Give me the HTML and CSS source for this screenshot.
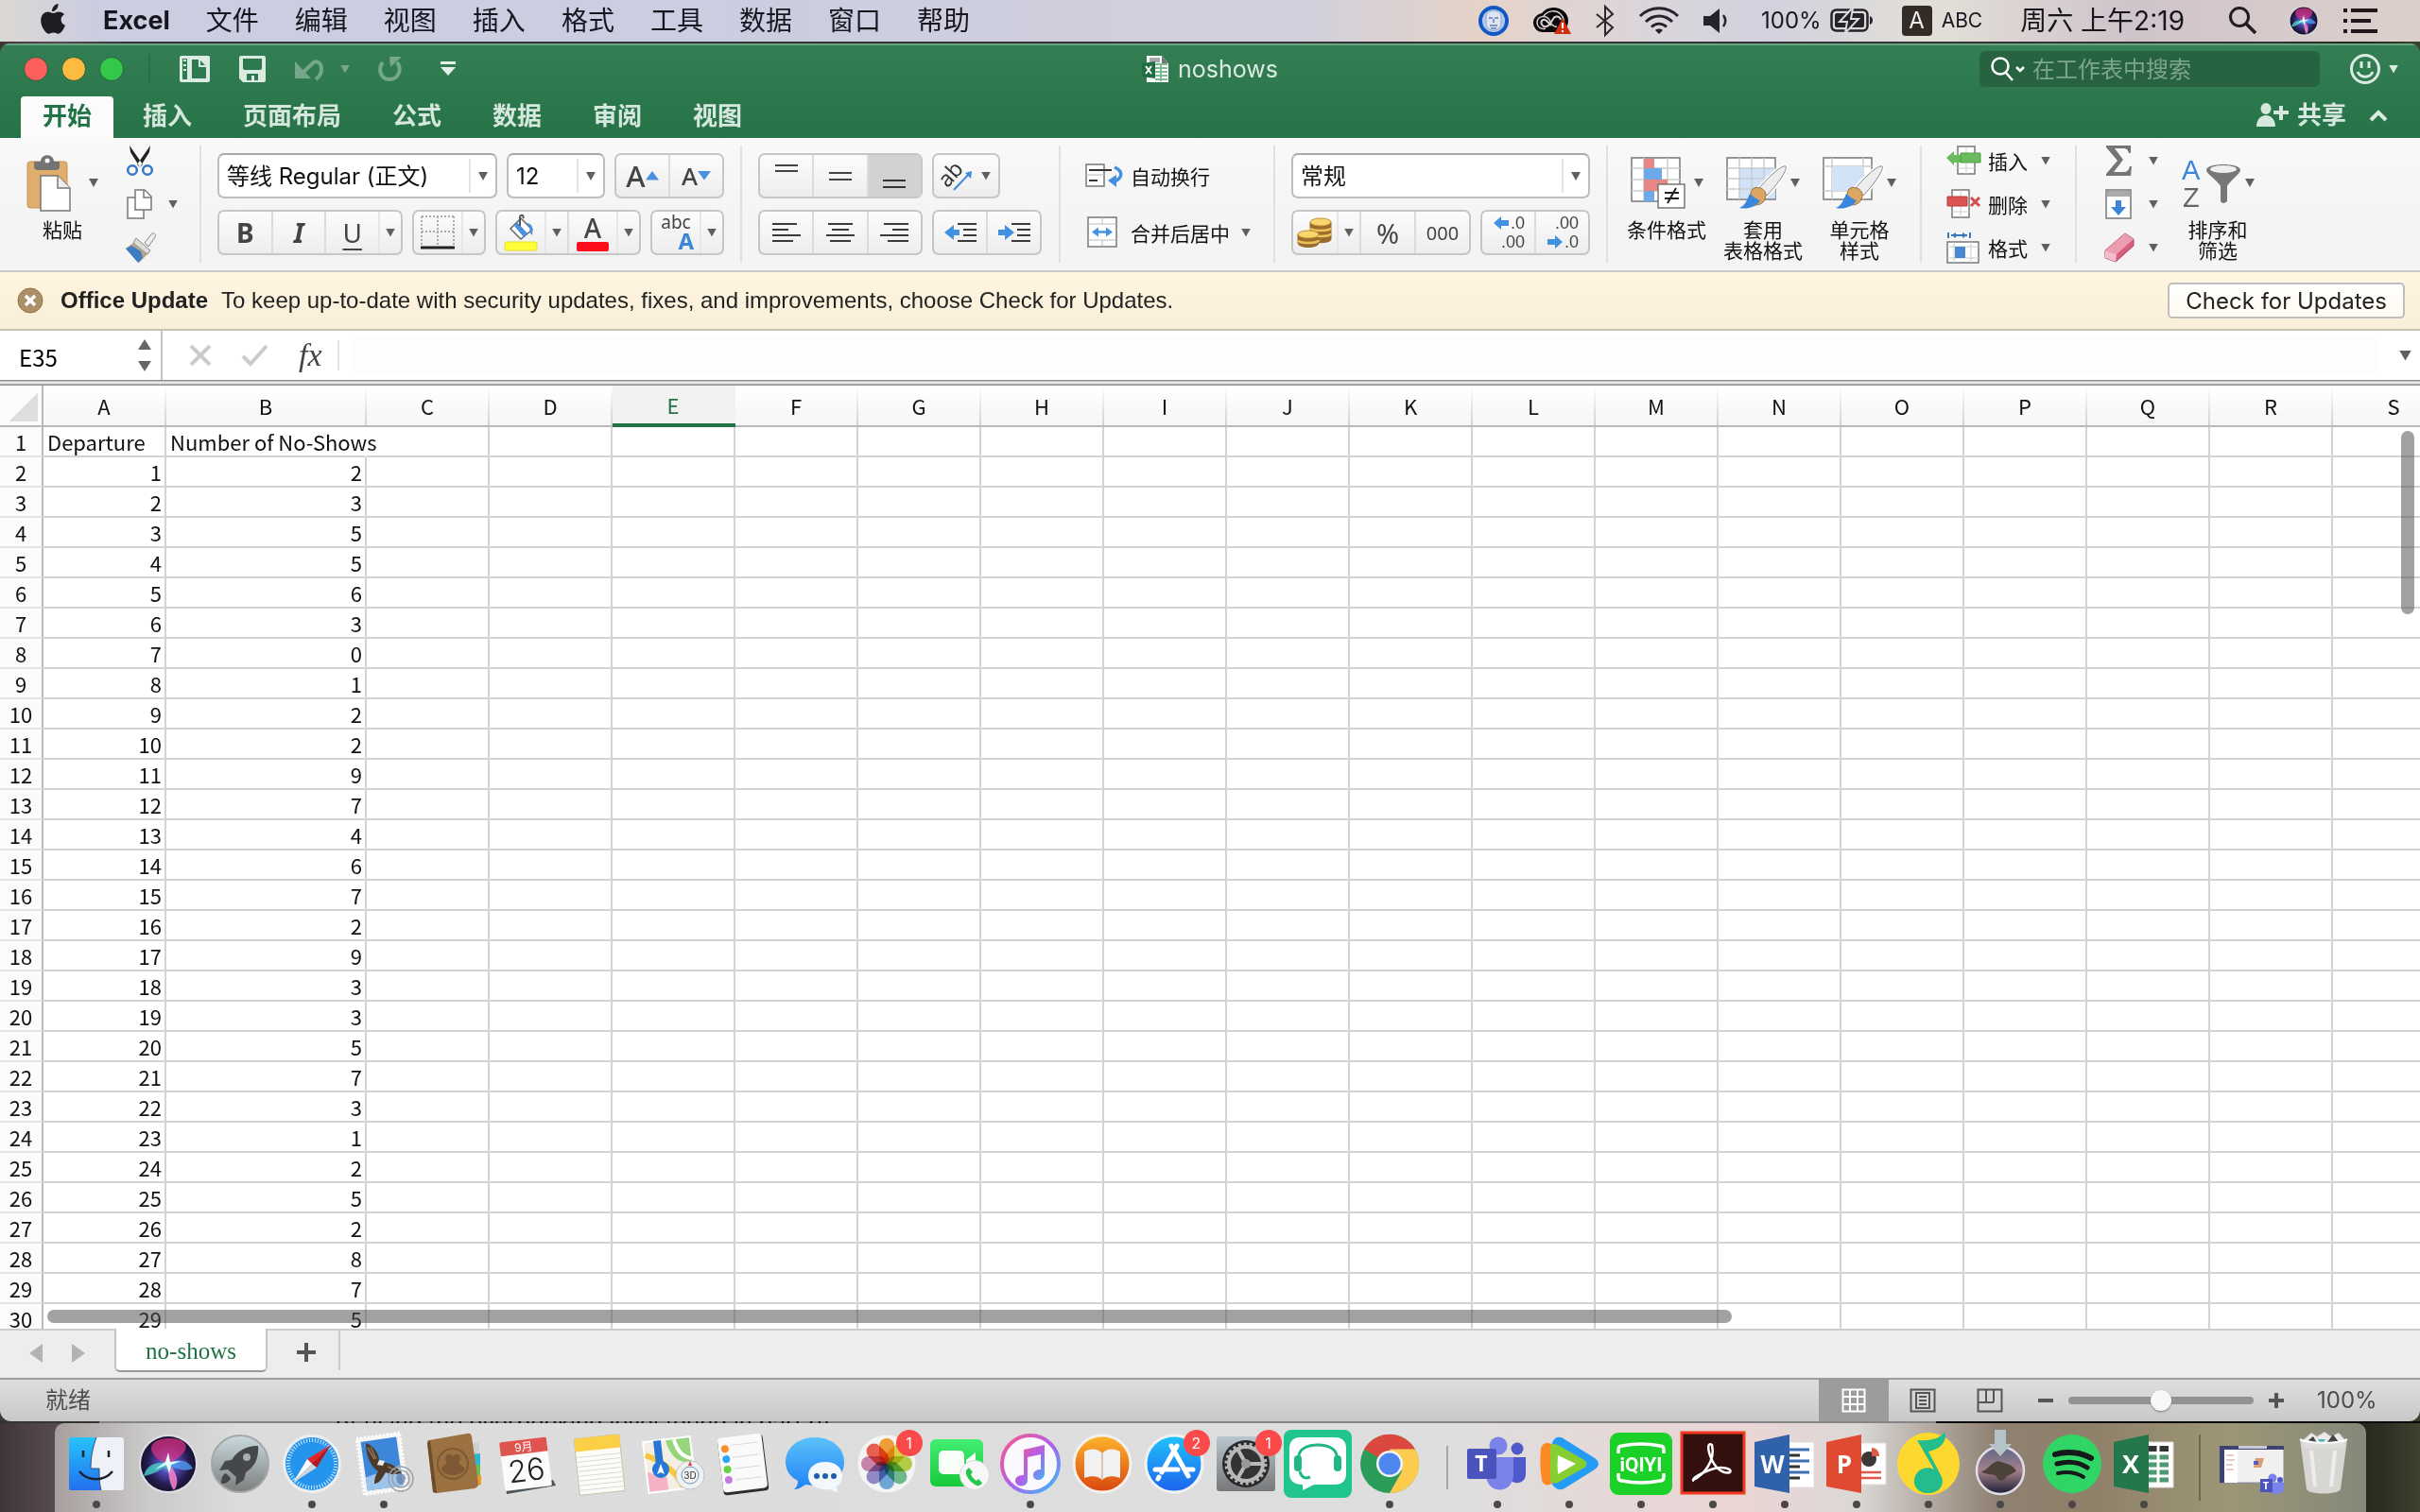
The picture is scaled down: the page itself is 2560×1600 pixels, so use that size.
FILE: index.html
```html
<!DOCTYPE html>
<html lang="zh-CN">
<head>
    <meta charset="UTF-8">
    <title>noshows</title>
    <link rel="stylesheet" href="styles.css">
</head>
<body>
    <header class="menubar">
        <svg class="apple" width="28" height="32" viewBox="0 0 28 32"><path fill="#1f1c22" d="M19.500 0c.3 2.600-.7 4.600-2 6.100-1.300 1.400-2.900 2.100-4.500 2-.2-2.300.7-4.300 2-5.700C16.200 1 18 .2 19.500 0zM26 11.200c-2.300 1.400-3.400 3.200-3.400 5.600 0 2.900 1.600 5 4.300 6-.8 2.500-2 4.700-3.500 6.500-1.300 1.600-2.500 2.400-3.800 2.400-1.900 0-2.600-1.200-5-1.200s-3.200 1.200-5 1.200c-1.400 0-2.700-1-4.200-2.900C2.800 25.700 1.200 21.600 1.200 17.700c0-5.600 3.400-9.200 7.500-9.200 2.300 0 4 1.500 5.600 1.500 1.500 0 3.400-1.600 6-1.600 2.400 0 4.400 1 5.700 2.800z"/></svg>
        <nav class="menus">
            <a href="#" class="app-name">Excel</a>
            <a href="#">文件</a>
            <a href="#">编辑</a>
            <a href="#">视图</a>
            <a href="#">插入</a>
            <a href="#">格式</a>
            <a href="#">工具</a>
            <a href="#">数据</a>
            <a href="#">窗口</a>
            <a href="#">帮助</a>
        </nav>
        <div class="menu-extras">
            <svg width="32" height="32" viewBox="0 0 32 32"><circle cx="16" cy="16" r="14" fill="#b5caec" stroke="#1258c4" stroke-width="4"/><path d="M8 12C8 3 24 3 24 12v6c0 11-16 11-16 0z" fill="#dfe4ee" stroke="#8aa6d8"/><path d="M11 13h4M17 13h4M16 14v4M12 21h8M13 24h6" stroke="#7b96c9" stroke-width="2"/></svg>
            <svg width="42" height="30" viewBox="0 0 42 30"><path d="M11 27C5 27 1 22 1 17c0-5 4-9 9-10C13 3 17 1 22 1c9 0 16 6 16 14 0 7-5 12-12 12z" fill="#0a0a0a"/><path d="M14 23c-5 2-9-2-9-6 0-8 11-9 14-1 2 4 4 6 7 5M12 10c4-6 13-7 18-2 4 4 4 9 1 12" fill="none" stroke="#d8d0d2" stroke-width="1.500"/><path d="M20 20l-5-5c-3-3-7 0-5 4 2 3 5 3 8 0l4-6c2-4 7-3 8 1" fill="none" stroke="#d8d0d2" stroke-width="2"/><path d="M32 12 41 29H23z" fill="#d02f10"/><path d="M32 17v6M32 25v2" stroke="#fff" stroke-width="2"/></svg>
            <svg width="20" height="32" viewBox="0 0 20 32"><path d="M1 9l17 14-8 8V1l8 8L1 23" fill="none" stroke="#2b262c" stroke-width="2"/></svg>
            <svg width="44" height="30" viewBox="0 0 44 30"><g fill="none" stroke="#26222c" stroke-width="3"><path d="M2 10c11-11 29-11 40 0"/><path d="M8 16c8-8 20-8 28 0"/><path d="M14 21.500c5-4.500 11-4.500 16 0"/></g><path d="M22 29l-4-4c2-2 6-2 8 0z" fill="#26222c"/></svg>
            <svg width="28" height="26" viewBox="0 0 28 26"><path d="M0 8h7l10-8v26L7 18H0z" fill="#26222c"/><path d="M21 7c3 4 3 8 0 12" fill="none" stroke="#26222c" stroke-width="2.500"/></svg>
            <span class="battery-pct">100%</span>
            <svg class="battery" width="48" height="26" viewBox="0 0 48 26"><rect x="1.500" y="1.500" width="38" height="22" rx="5" fill="none" stroke="#26222a" stroke-width="2.500"/><rect x="5" y="5" width="31" height="15" rx="2" fill="#26222a"/><path d="M42 8c4 1 4 8 0 9z" fill="#26222a"/><path d="M23 0L10 14h8l-2 12 14-15h-8l2-11z" fill="#26222a" stroke="#dddbe0" stroke-width="2"/></svg>
            <span class="ime">A</span>
            <span class="ime-name">ABC</span>
            <span class="clock">周六 上午2:19</span>
            <svg width="32" height="30" viewBox="0 0 32 30"><circle cx="12" cy="11" r="9.500" fill="none" stroke="#221c22" stroke-width="3"/><path d="M19 18l10 10" stroke="#221c22" stroke-width="3.500"/></svg>
            <svg class="siri-mini" width="38" height="38" viewBox="0 0 76 76"><use href="#siri-ball"/></svg>
            <svg width="36" height="26" viewBox="0 0 36 26"><path d="M0 2h4M8 2h28M0 13h4M8 13h21M0 24h4M8 24h28" stroke="#1f171b" stroke-width="4"/></svg>
        </div>
    </header>

    <main class="window">
        <div class="titlebar">
            <div class="quick">
                <button class="light red" aria-label="关闭"></button>
                <button class="light yellow" aria-label="最小化"></button>
                <button class="light green" aria-label="缩放"></button>
                <span class="quick-sep"></span>
                <button aria-label="新建"><svg width="32" height="28" viewBox="0 0 32 28"><rect width="32" height="28" rx="2" fill="#dcebe2"/><path d="M3 3h5v22H3z" fill="#2e7a50"/><path d="M4 5h3M4 10h3M4 15h3" stroke="#dcebe2" stroke-width="2"/><path d="M13 4h8l7 7v13H13z" fill="#2e7a50"/><path d="M21 4v7h7" fill="none" stroke="#dcebe2" stroke-width="2"/></svg></button>
                <button aria-label="保存"><svg width="28" height="28" viewBox="0 0 28 28"><path d="M0 2q0-2 2-2h24q2 0 2 2v24q0 2-2 2H4l-4-4z" fill="#dcebe2"/><path d="M4 3h20v10q0 2-2 2H6q-2 0-2-2zM8 19h12v7h-4v-5h-3v5H8z" fill="#2e7a50"/></svg></button>
                <button class="dim" aria-label="撤销"><svg width="32" height="28" viewBox="0 0 32 28"><path d="M8 18L20 7c4-2 8 1 8 7 0 5-2 8-6 11" fill="none" stroke="#dcebe2" stroke-width="4"/><path d="M0 6v18h17z" fill="#dcebe2"/></svg></button>
                <button class="dim" aria-label="撤销选项"><span class="caret light-caret"></span></button>
                <button class="dim" aria-label="重做"><svg width="26" height="28" viewBox="0 0 26 28"><path d="M5 7C-1 14 3 25 12 25s14-10 8-18" fill="none" stroke="#dcebe2" stroke-width="4"/><path d="M12 1h13L13 12z" fill="#dcebe2"/></svg></button>
                <button aria-label="自定义工具栏"><svg width="18" height="16" viewBox="0 0 18 16"><path d="M1 1.500h16" stroke="#e4f0e9" stroke-width="3"/><path d="M1 6h16l-8 9z" fill="#e4f0e9"/></svg></button>
            </div>
            <div class="doc-title">
                <svg width="30" height="30" viewBox="0 0 30 30"><path d="M5 1h16l7 8v20H5z" fill="#fff"/><path d="M8 3h11v5H8z" fill="#aaa"/><path d="M21 1v8h7z" fill="#767676"/><path d="M14 10h13M14 14h13M14 18h13M14 22h13M14 26h13M20 9v19" stroke="#7fbb92" stroke-width="2"/><path d="M0 9l14-2v18L0 23z" fill="#1e6e42"/><path d="M4 12l6 8M10 12l-6 8" stroke="#fff" stroke-width="2"/></svg>
                <span>noshows</span>
            </div>
            <div class="title-right">
                <label class="search">
                    <svg width="38" height="26" viewBox="0 0 38 26"><circle cx="10" cy="10" r="8.500" fill="none" stroke="#fff" stroke-width="2.500"/><path d="M16 17l7 8M27 11l4 4 4-4" fill="none" stroke="#fff" stroke-width="2.500"/></svg>
                    <input type="text" placeholder="在工作表中搜索" aria-label="在工作表中搜索">
                </label>
                <button class="smile" aria-label="反馈">
                    <svg width="34" height="34" viewBox="0 0 34 34"><g fill="none" stroke="#dcebe2" stroke-width="3"><circle cx="17" cy="17" r="14.500"/><path d="M13 9v7M21 9v7M9 20c3 7 13 7 16 0"/></g></svg>
                    <span class="caret light-caret"></span>
                </button>
            </div>
        </div>

        <div class="tabs">
            <button class="tab active">开始</button>
            <button class="tab">插入</button>
            <button class="tab">页面布局</button>
            <button class="tab">公式</button>
            <button class="tab">数据</button>
            <button class="tab">审阅</button>
            <button class="tab">视图</button>
            <button class="share">
                <svg width="34" height="26" viewBox="0 0 34 26"><ellipse cx="10" cy="6" rx="5.500" ry="6"/><path d="M0 25c0-16 20-16 20 0zM24 3h4v5h6v4h-6v6h-4v-6h-6V8h6z"/></svg>
                共享
            </button>
            <button class="collapse" aria-label="折叠功能区"><svg width="20" height="14" viewBox="0 0 20 14"><path d="M2 12l8-8 8 8" fill="none" stroke="#dcebe2" stroke-width="4"/></svg></button>
        </div>

        <div class="ribbon">
            <section class="group g-clip">
                <button class="big">
                    <span class="big-top">
                        <svg width="48" height="60" viewBox="0 0 48 60"><rect x="1" y="7" width="42" height="49" rx="3" fill="#e0ae6c" stroke="#c8934d"/><path d="M8 7h7c0-9 14-9 14 0h6v5q0 4-4 4H12q-4 0-4-4z" fill="#747474"/><circle cx="22" cy="6" r="2.500" fill="#fff"/><path d="M15 22h18l13 13v24H15z" fill="#fff" stroke="#777" stroke-width="1.500"/><path d="M33 22v13h13" fill="#eee" stroke="#777" stroke-width="1.500"/></svg>
                        <span class="caret"></span>
                    </span>
                    <span class="big-label">粘贴</span>
                </button>
                <div class="stack">
                    <button class="small" aria-label="剪切"><svg width="32" height="32" viewBox="0 0 32 32"><path d="M5 0l14 20-3 3L6 7zM27 0L13 20l3 3L26 7z" fill="#222"/><g fill="none" stroke="#3478c8" stroke-width="2.500"><circle cx="8" cy="26" r="4.800"/><circle cx="24" cy="26" r="4.800"/></g></svg></button>
                    <button class="small" aria-label="复制"><svg width="32" height="32" viewBox="0 0 32 32"><g fill="#fff" stroke="#777" stroke-width="1.500"><path d="M3 9h11l6 6v16H3z"/><path d="M11 1h10l7 7v14H11z"/><path d="M20 1v8h8"/></g></svg><span class="caret"></span></button>
                    <button class="small" aria-label="格式刷"><svg width="34" height="32" viewBox="0 0 34 32"><path d="M21 11l7-9c2-3 6 0 4 3l-7 10z" fill="#eee" stroke="#888"/><path d="M12 6l15 13-3 4L9 11z" fill="#ddd" stroke="#888"/><path d="M9 11l15 12-9 9L1 17z" fill="#b7a28d"/><path d="M1 17l6-3 10 6 2 7-5 5z" fill="#3c7cc0"/></svg></button>
                </div>
            </section>

            <section class="group g-font">
                <div class="rows">
                    <div class="row">
                        <div class="pick font-name"><select aria-label="字体"><option>等线 Regular (正文)</option></select><span class="caret"></span></div>
                        <div class="pick font-size"><select aria-label="字号"><option>12</option></select><span class="caret"></span></div>
                        <div class="seg two">
                            <button aria-label="增大字号"><span class="grow">A</span><svg width="14" height="10" viewBox="0 0 14 10"><path d="M0 9.500L7 0l7 9.500z" fill="#4a90dd"/></svg></button>
                            <button aria-label="减小字号"><span class="shrink">A</span><svg width="14" height="10" viewBox="0 0 14 10"><path d="M0 0h14L7 9.500z" fill="#4a90dd"/></svg></button>
                        </div>
                    </div>
                    <div class="row">
                        <div class="seg biu"><button class="b">B</button><button class="i">I</button><button class="u">U</button><button class="drop" aria-label="下划线选项"><span class="caret"></span></button></div>
                        <div class="seg mini"><button aria-label="边框"><svg width="36" height="36" viewBox="0 0 36 36"><path d="M1 1h34M1 17h34M1 1v30M18 1v30M35 1v30" fill="none" stroke="#aaa" stroke-width="2" stroke-dasharray="2 2"/><path d="M0 34h36" stroke="#222" stroke-width="3"/></svg></button><button class="drop" aria-label="边框选项"><span class="caret"></span></button></div>
                        <div class="seg colors">
                            <button aria-label="填充颜色"><svg width="36" height="40" viewBox="0 0 36 40"><path d="M18 5L30 17 18 27 7 16z" fill="#fff" stroke="#666" stroke-width="1.500"/><path d="M14 9l11 12-4 4L11 13z" fill="#4a90e0"/><path d="M17 13V4q0-3 3-2l1 3" fill="none" stroke="#555" stroke-width="2"/><path d="M23 10c8 0 8 6 7 13-4-3-1-8-5-11z" fill="#4a90e0"/><rect x="1" y="30" width="34" height="9" rx="2" fill="#fffc38" stroke="#e8dc2a"/></svg></button>
                            <button class="drop" aria-label="填充颜色选项"><span class="caret"></span></button>
                            <button class="font-color" aria-label="字体颜色"><span class="letter">A</span><span class="swatch"></span></button>
                            <button class="drop" aria-label="字体颜色选项"><span class="caret"></span></button>
                        </div>
                        <div class="seg mini"><button class="phonetic"><span>abc</span><b>A</b></button><button class="drop" aria-label="拼音选项"><span class="caret"></span></button></div>
                    </div>
                </div>
            </section>

            <section class="group g-align">
                <div class="rows">
                    <div class="row">
                        <div class="seg three">
                            <button aria-label="顶端对齐"><svg width="26" height="28" viewBox="0 0 26 28"><path d="M1 3h24M1 9h24" stroke="#444" stroke-width="2"/></svg></button>
                            <button aria-label="垂直居中"><svg width="26" height="28" viewBox="0 0 26 28"><path d="M1 11h24M1 18h24" stroke="#444" stroke-width="2"/></svg></button>
                            <button class="on" aria-label="底端对齐"><svg width="26" height="28" viewBox="0 0 26 28"><path d="M1 19h24M1 26h24" stroke="#333" stroke-width="2"/></svg></button>
                        </div>
                        <div class="seg orient"><button aria-label="方向"><svg width="34" height="34" viewBox="0 0 34 34"><text x="2" y="27" transform="rotate(-48 8 24)" font-family="Noto Sans" font-size="23" fill="#333">ab</text><path d="M13 32L30 14" stroke="#4089d8" stroke-width="2"/><path d="M32 12l-1 8-6-6z" fill="#4089d8"/></svg><span class="caret"></span></button></div>
                    </div>
                    <div class="row">
                        <div class="seg three">
                            <button aria-label="左对齐"><svg width="30" height="22" viewBox="0 0 30 22"><path d="M0 2h26M0 8h17M0 14h30M0 20h22" stroke="#3a3a3a" stroke-width="2"/></svg></button>
                            <button aria-label="居中"><svg width="30" height="22" viewBox="0 0 30 22"><path d="M2 2h26M6 8h18M0 14h30M4 20h22" stroke="#3a3a3a" stroke-width="2"/></svg></button>
                            <button aria-label="右对齐"><svg width="30" height="22" viewBox="0 0 30 22"><path d="M4 2h26M13 8h17M0 14h30M8 20h22" stroke="#3a3a3a" stroke-width="2"/></svg></button>
                        </div>
                        <div class="seg two">
                            <button aria-label="减少缩进"><svg width="34" height="22" viewBox="0 0 34 22"><path d="M14 2h20M20 8h14M20 14h14M14 20h20" stroke="#3a3a3a" stroke-width="2"/><path d="M0 11L10 3v5h6v6h-6v5z" fill="#4290e0"/></svg></button>
                            <button aria-label="增加缩进"><svg width="34" height="22" viewBox="0 0 34 22"><path d="M14 2h20M20 8h14M20 14h14M14 20h20" stroke="#3a3a3a" stroke-width="2"/><path d="M17 11L7 3v5H0v6h7v5z" fill="#4290e0"/></svg></button>
                        </div>
                    </div>
                </div>
            </section>

            <section class="group g-wrap">
                <div class="rows">
                    <button class="wide"><svg width="40" height="26" viewBox="0 0 40 26"><path d="M1 1h19v23H1z" fill="#fff" stroke="#777" stroke-width="1.500"/><path d="M1 12h19" stroke="#bbb"/><path d="M4 7h24M4 18h9" stroke="#333" stroke-width="2"/><path d="M31 4c9 4 9 11 0 15" fill="none" stroke="#4290e0" stroke-width="3.500"/><path d="M24 18l9-6v13z" fill="#4290e0"/></svg>自动换行</button>
                    <button class="wide"><svg width="40" height="34" viewBox="0 0 40 34"><path d="M3 1h30v31H3z" fill="#fff" stroke="#777" stroke-width="1.500"/><path d="M3 8h30M3 25h30M18 1v7M18 25v7" stroke="#bbb"/><path d="M12 16.500h12" stroke="#4290e0" stroke-width="2.500"/><path d="M7 16.500l7-5v10zM29 16.500l-7-5v10z" fill="#4290e0"/></svg>合并后居中<span class="caret"></span></button>
                </div>
            </section>

            <section class="group g-num">
                <div class="rows">
                    <div class="row">
                        <div class="pick number-format"><select aria-label="数字格式"><option>常规</option></select><span class="caret"></span></div>
                    </div>
                    <div class="row">
                        <div class="seg num">
                            <button class="coins" aria-label="会计数字格式"><svg width="40" height="32" viewBox="0 0 40 32"><g stroke="#94682c" fill="#9c6c2c"><path d="M15 5v18c0 5 22 5 22 0V5z"/><path d="M2 18v9c0 6 22 6 22 0v-9z"/></g><path d="M15 11c0 4 22 4 22 0M15 17c0 4 22 4 22 0M2 24c0 4 22 4 22 0" fill="none" stroke="#ecc25c" stroke-width="2.500"/><ellipse cx="26" cy="5" rx="11" ry="4" fill="#fad66e" stroke="#c29336"/><ellipse cx="13" cy="18" rx="11" ry="4" fill="#fad66e" stroke="#c29336"/></svg></button>
                            <button class="drop" aria-label="会计格式选项"><span class="caret"></span></button>
                            <button class="pct">%</button>
                            <button class="thousand">000</button>
                        </div>
                        <div class="seg two dec">
                            <button><span><svg width="16" height="14" viewBox="0 0 16 14"><path d="M0 7l8-7v4h8v6H8v4z" fill="#4290e0"/></svg>.0</span><span>.00</span></button>
                            <button><span>.00</span><span><svg width="16" height="14" viewBox="0 0 16 14"><path d="M16 7L8 0v4H0v6h8v4z" fill="#4290e0"/></svg>.0</span></button>
                        </div>
                    </div>
                </div>
            </section>

            <section class="group g-styles">
                <button class="big">
                    <span class="big-top">
                        <svg width="64" height="56" viewBox="0 0 64 56"><path d="M2 1h51v46H2z" fill="#fff" stroke="#777" stroke-width="1.500"/><path d="M2 12h51M2 24h51M2 36h51M15 1v46M40 1v46" stroke="#ccc" stroke-width="1.500"/><path d="M15 2h11v10H15zM15 24h25v12H15z" fill="#e88585"/><path d="M15 12h19v12H15zM15 36h11v11H15z" fill="#6eaaea"/><path d="M30 29h28v25H30z" fill="#fff" stroke="#777" stroke-width="1.500"/><path d="M37 38h15M37 44h15M49 33L40 49" stroke="#222" stroke-width="2"/></svg>
                        <span class="caret"></span>
                    </span>
                    <span class="big-label">条件格式</span>
                </button>
                <button class="big">
                    <span class="big-top">
                        <svg width="64" height="56" viewBox="0 0 64 56"><path d="M1 1h51v44H1z" fill="#fff" stroke="#777" stroke-width="1.500"/><path d="M14 12h38v32H14z" fill="#d3e3f7"/><path d="M1 12h51M1 23h51M1 34h51M14 1v44M27 1v44M40 1v44" stroke="#c5ccd4" stroke-width="1.500"/><g id="brush"><path d="M63 10c2 2-4 14-20 31l-9-7C45 21 59 8 63 10z" fill="#ededed" stroke="#fff" stroke-width="4"/><path d="M63 10c2 2-4 14-20 31l-9-7C45 21 59 8 63 10z" fill="#ededed" stroke="#888"/><path d="M28 34c5-4 14 0 14 6 0 7-5 11-11 11-5-1-7-12-3-17z" fill="#dca762" stroke="#9a713a"/><path d="M25 39c3 2 5 5 11 7-4 7-14 10-22 8 7-3 8-9 11-15z" fill="#3b86db"/></g></svg>
                        <span class="caret"></span>
                    </span>
                    <span class="big-label">套用<br>表格格式</span>
                </button>
                <button class="big">
                    <span class="big-top">
                        <svg width="64" height="56" viewBox="0 0 64 56"><path d="M1 1h51v44H1z" fill="#fff" stroke="#777" stroke-width="1.500"/><path d="M1 10h51M1 36h51M10 1v44M43 1v44" stroke="#ccc" stroke-width="1.500"/><path d="M10 10h33v26H10z" fill="#d3e3f7"/><use href="#brush"/></svg>
                        <span class="caret"></span>
                    </span>
                    <span class="big-label">单元格<br>样式</span>
                </button>
            </section>

            <section class="group g-cells">
                <div class="stack">
                    <button class="small text"><svg width="36" height="32" viewBox="0 0 36 32"><path d="M12 1h18v29H12z" fill="#fff" stroke="#777" stroke-width="1.500"/><path d="M21 1v29M12 24h18" stroke="#ccc"/><path d="M0 13l8-7v4h28v8H8v3z" fill="#6aba5e"/><path d="M15 8h21v10H15z" fill="#6aba5e" stroke="#4e9d44"/></svg>插入<span class="caret"></span></button>
                    <button class="small text"><svg width="36" height="32" viewBox="0 0 36 32"><path d="M6 1h18v29H6z" fill="#fff" stroke="#777" stroke-width="1.500"/><path d="M15 1v29M6 24h18" stroke="#ccc"/><path d="M1 8h21v10H1z" fill="#da5252" stroke="#b83c3c"/><path d="M26 9l9 9M35 9l-9 9" stroke="#d34c4c" stroke-width="3"/></svg>删除<span class="caret"></span></button>
                    <button class="small text"><svg width="36" height="34" viewBox="0 0 36 34"><path d="M1 11h33v22H1z" fill="#fff" stroke="#777" stroke-width="1.500"/><path d="M1 16h33M1 28h33M8 11v22M26 11v22" stroke="#ccc"/><path d="M9 16h11v12H9z" fill="#4888cc"/><path d="M2 1v6M25 1v6M5 4h17" stroke="#3a78bc" stroke-width="2"/><path d="M5 4l5-3v6zM22 4l-5-3v6z" fill="#3a78bc"/></svg>格式<span class="caret"></span></button>
                </div>
            </section>

            <section class="group g-edit">
                <div class="stack">
                    <button class="small" aria-label="自动求和"><svg width="34" height="32" viewBox="0 0 34 32"><path d="M3 0h26v8h-2c-1-4-3-5-6-5H12l9 12-10 13h11c3 0 5-2 6-6h2l-1 10H3v-2l12-14L3 2z" fill="#757575"/></svg><span class="caret"></span></button>
                    <button class="small" aria-label="填充"><svg width="34" height="32" viewBox="0 0 34 32"><path d="M3 1h26v30H3z" fill="#fff" stroke="#777" stroke-width="1.500"/><path d="M4 2h24v6H4z" fill="#aaa"/><path d="M13 12h6v7h5l-8 9-8-9h5z" fill="#3d84d4"/></svg><span class="caret"></span></button>
                    <button class="small" aria-label="清除"><svg width="34" height="32" viewBox="0 0 34 32"><path d="M23 1l9 6v7L13 31 2 27v-8z" fill="#d8607e" stroke="#a8405c"/><path d="M23 1l9 6-18 16-12-4z" fill="#eb9db2"/><path d="M2 19l12 4-1 8-11-4z" fill="#f2bccb"/></svg><span class="caret"></span></button>
                </div>
                <button class="big">
                    <span class="big-top">
                        <svg width="64" height="56" viewBox="0 0 64 56"><g font-family="Liberation Sans" font-size="29"><text x="1" y="24" fill="#3d84d8">A</text><text x="2" y="53" fill="#666">Z</text></g><path d="M27 14c0-8 36-8 36 0 0 4-11 11-14 17v16q-4 4-7 0V31C39 25 27 18 27 14z" fill="#777"/><ellipse cx="45" cy="13" rx="14" ry="4" fill="#eee"/></svg>
                        <span class="caret"></span>
                    </span>
                    <span class="big-label">排序和<br>筛选</span>
                </button>
            </section>
        </div>

        <div class="notice">
            <button class="notice-close" aria-label="关闭提示"><svg width="28" height="28" viewBox="0 0 28 28"><circle cx="14" cy="14" r="13" fill="#ab9068" stroke="#8d734d"/><path d="M9 9l10 10M19 9L9 19" stroke="#fff" stroke-width="3.500"/></svg></button>
            <strong>Office Update</strong>
            <span>To keep up-to-date with security updates, fixes, and improvements, choose Check for Updates.</span>
            <button class="check">Check for Updates</button>
        </div>

        <div class="formula-bar">
            <div class="name-box">
                <input type="text" value="E35" aria-label="名称框">
                <svg width="14" height="34" viewBox="0 0 14 34"><path d="M0 11L7 0l7 11zM0 23h14L7 34z" fill="#666"/></svg>
            </div>
            <button aria-label="取消"><svg width="24" height="24" viewBox="0 0 24 24"><path d="M2 2l20 20M22 2L2 22" stroke="#ccc" stroke-width="4"/></svg></button>
            <button aria-label="输入"><svg width="30" height="24" viewBox="0 0 30 24"><path d="M2 13l8 8L27 2" fill="none" stroke="#ccc" stroke-width="4"/></svg></button>
            <button class="fx">fx</button>
            <input class="formula" type="text" aria-label="编辑栏">
            <button class="expand" aria-label="展开编辑栏"><span class="caret"></span></button>
        </div>

        <div class="sheet">
            <table class="cells">
                <thead><tr id="letters"></tr></thead>
                <tbody id="rows"></tbody>
            </table>
            <div class="scroll-y"></div>
            <div class="scroll-x"></div>
        </div>

        <div class="sheet-tabs">
            <button aria-label="上一张"><svg width="14" height="20" viewBox="0 0 14 20"><path d="M14 0v20L0 10z" fill="#b3b3b3"/></svg></button>
            <button aria-label="下一张"><svg width="14" height="20" viewBox="0 0 14 20"><path d="M0 0v20l14-10z" fill="#b3b3b3"/></svg></button>
            <button class="sheet-tab">no-shows</button>
            <button class="add" aria-label="新建工作表"><svg width="20" height="20" viewBox="0 0 20 20"><path d="M10 0v20M0 10h20" stroke="#555" stroke-width="4"/></svg></button>
        </div>

        <footer class="status">
            <span class="ready">就绪</span>
            <button class="view on" aria-label="普通视图"><svg width="26" height="26" viewBox="0 0 26 26"><path d="M1.500 1.500h23v23h-23zM9 1v24M17 1v24M1 9h24M1 17h24" fill="none" stroke="#fff" stroke-width="2"/></svg></button>
            <button class="view" aria-label="页面布局视图"><svg width="28" height="26" viewBox="0 0 28 26"><path d="M1.500 1.500h25v23h-25zM7 5h14v16H7zM10 9h8M10 13h8M10 17h8" fill="none" stroke="#555" stroke-width="2"/></svg></button>
            <button class="view" aria-label="分页预览"><svg width="28" height="26" viewBox="0 0 28 26"><path d="M1.500 1.500h25v23h-25zM1 15h17M18 1v14M10 1v14" fill="none" stroke="#555" stroke-width="2"/></svg></button>
            <button class="zoom" aria-label="缩小"><svg width="16" height="16" viewBox="0 0 16 16"><path d="M0 8h16" stroke="#555" stroke-width="4"/></svg></button>
            <input type="range" min="0" max="100" value="50" aria-label="显示比例">
            <button class="zoom" aria-label="放大"><svg width="16" height="16" viewBox="0 0 16 16"><path d="M0 8h16M8 0v16" stroke="#555" stroke-width="4"/></svg></button>
            <span class="zoom-value">100%</span>
        </footer>
    </main>

    <div class="behind"><span>of using the overbooking level found in part b).</span></div>

    <div class="dock-area">
        <div class="dock">
            <a href="#" class="app running" aria-label="访达"><svg viewBox="0 0 76 76"><defs><linearGradient id="finder" x2="0" y2="1"><stop stop-color="#27c4fb"/><stop offset="1" stop-color="#2470f0"/></linearGradient></defs><rect x="9" y="10" width="58" height="56" rx="3" fill="#eef2f8"/><path d="M11 10h27c-4 11-6 21-6 33h9c0 8 0 16 2 23H11q-2 0-2-2V12q0-2 2-2z" fill="url(#finder)"/><path d="M38 10c-4 11-6 21-6 33h9c0 8 0 16 2 23" fill="none" stroke="#35507c"/><path d="M24 24v7M51 24v7M20 46c9 11 26 11 35 0" fill="none" stroke="#1b2230" stroke-width="2.500"/></svg></a>
            <a href="#" class="app" aria-label="Siri"><svg viewBox="0 0 76 76"><defs><radialGradient id="siri"><stop stop-color="#64e2ea"/><stop offset=".35" stop-color="#514ab8"/><stop offset=".75" stop-color="#261c50"/><stop offset="1" stop-color="#141430"/></radialGradient></defs><g id="siri-ball"><circle cx="38" cy="38" r="31" fill="#dfdfe5"/><circle cx="38" cy="38" r="29" fill="url(#siri)"/><path d="M38 38C14 30 14 12 38 11c24 0 26 14 0 27z" fill="#d4307f" opacity=".75"/><path d="M38 38C22 34 14 42 12 51c12-2 20-8 26-13z" fill="#45d5c8" opacity=".8"/><path d="M38 38c12-7 22-3 26 5-10 4-18 0-26-5z" fill="#4d9cf0" opacity=".8"/><path d="M38 38c10 10 12 20 6 28-5-6-6-18-6-28z" fill="#ee7fc8" opacity=".9"/><path d="M38 26l2 10 12-1-11 4-2 9-3-9-12 5 11-8z" fill="#e9ffff"/></g></svg></a>
            <a href="#" class="app" aria-label="启动台"><svg viewBox="0 0 76 76"><defs><linearGradient id="launch" x2="0" y2="1"><stop stop-color="#cbdade"/><stop offset="1" stop-color="#7b7e7d"/></linearGradient></defs><circle cx="38" cy="38" r="30" fill="url(#launch)" stroke="#a3a9ab" stroke-width="2"/><path d="M57 19c-12 0-22 5-28 15l-7 1-6 10 9-1 9 8-1 9 9-6 2-8c10-6 14-16 13-28z" fill="#45474a"/><circle cx="45" cy="31" r="4" fill="#a4adb0"/><path d="M23 48c-4 2-5 6-5 11 5 0 9-2 10-6z" fill="#45474a"/></svg></a>
            <a href="#" class="app running" aria-label="Safari"><svg viewBox="0 0 76 76"><circle cx="38" cy="38" r="31" fill="#eee"/><circle cx="38" cy="38" r="28" fill="#2494ec"/><circle cx="38" cy="38" r="25" fill="none" stroke="#d6ecfd" stroke-width="4" stroke-dasharray="1 2"/><path d="M58 18L33 33l5 5z" fill="#e2262a"/><path d="M58 18L43 42l-5-4z" fill="#b9161c"/><path d="M18 58l15-25 5 5z" fill="#fff"/><path d="M18 58l25-16-5-4z" fill="#cfd5da"/></svg></a>
            <a href="#" class="app running" aria-label="邮件"><svg viewBox="0 0 76 76"><g transform="rotate(-8 36 38)"><rect x="13" y="8" width="46" height="60" fill="#f4f4f4" stroke="#fff" stroke-width="3" stroke-dasharray="2 2"/><rect x="17" y="12" width="38" height="52" fill="#3d87da"/><path d="M17 50l38-8v22H17z" fill="#9cc5ec"/></g><path d="M19 16c8 3 13 9 14 18l7 3c7 1 13 5 17 11-7 2-13 1-17-1l-3 5c-3 5-6 7-9 7 0-5 1-9 4-13-9-6-13-18-13-30z" fill="#4e3a2b"/><path d="M21 21l7 12M24 20l6 13M42 41l9 4" stroke="#8b735a" stroke-width="1.500"/><path d="M33 34l6 1-2 5-6-1z" fill="#f1ede6"/><g fill="none" stroke="#9aa1aa" stroke-width="1.500"><circle cx="56" cy="54" r="13"/><circle cx="56" cy="54" r="9"/></g><path d="M52 50c3-3 8-2 9 2 0 5-2 8-5 8s-6-5-4-10z" fill="#5a79a8" opacity=".7"/></svg></a>
            <a href="#" class="app" aria-label="通讯录"><svg viewBox="0 0 76 76"><path d="M54 16h9v12h-9z" fill="#cfcfcf"/><path d="M54 28l10-1v13H54z" fill="#33b3d2"/><path d="M54 40l10-1v12H54z" fill="#70bb4e"/><path d="M54 51l11-1v10l-8 2z" fill="#f0972c"/><path d="M10 13L50 6q4-1 5 3l7 50q0 4-4 5l-40 5q-3 0-4-3L8 16q0-3 2-3z" fill="#9c7142"/><path d="M8 16l6 52 4 1-7-56z" fill="#6e4c28"/><circle cx="35" cy="38" r="16" fill="none" stroke="#7e5933" stroke-width="2"/><path d="M23 44c0-5 5-5 6-7-4-4-1-11 4-9 1 2 3 2 4 0 6-2 8 5 4 9 1 3 6 3 7 7-6 8-20 8-25 0z" fill="#7e5933"/></svg></a>
            <a href="#" class="app" aria-label="日历"><svg viewBox="0 0 76 76"><path d="M9 19l7 51 52-9-3-6-50 6z" fill="#4a5458"/><g transform="rotate(-7 38 38)"><rect x="11" y="12" width="50" height="52" rx="2" fill="#fbfbfb"/><path d="M11 14q0-2 2-2h46q2 0 2 2v13H11z" fill="#e05450"/><g font-family="Inter, Noto Sans CJK SC" text-anchor="middle"><text x="36" y="24" font-size="12" fill="#fff">9月</text><text x="36" y="56" font-size="32" font-weight="300" fill="#222">26</text></g></g></svg></a>
            <a href="#" class="app" aria-label="备忘录"><svg viewBox="0 0 76 76"><g transform="rotate(-6 38 38)"><rect x="14" y="9" width="48" height="60" rx="1" fill="#fdfdf8" stroke="#c9c0a8"/><path d="M14 9h48v14H14z" fill="#fbd045"/><path d="M15 29h46M15 34h46M15 39h46M15 44h46M15 49h46M15 54h46M15 59h46M15 64h46" stroke="#d8d8d8"/></g></svg></a>
            <a href="#" class="app" aria-label="地图"><svg viewBox="0 0 76 76"><g transform="rotate(-7 36 38)"><rect x="11" y="12" width="50" height="54" fill="#f3efe2" stroke="#fff" stroke-width="2"/><path d="M35 13h25v26c-14 0-22-8-25-26z" fill="#96d67b"/><path d="M12 44l20 8v13H12z" fill="#f3b3c4"/><path d="M12 26c14 6 30 20 36 38" fill="none" stroke="#fbc73e" stroke-width="6"/><path d="M26 12v34" stroke="#2776d4" stroke-width="8"/><path d="M44 13c2 14 8 20 16 22" fill="none" stroke="#fff" stroke-width="4"/></g><circle cx="27" cy="44" r="9" fill="#2378d8"/><path d="M27 38l4 11-4-2-4 2z" fill="#fff"/><circle cx="58" cy="50" r="15" fill="#f0f1f3" stroke="#bfc3c8"/><circle cx="58" cy="50" r="9" fill="none" stroke="#6b96b8"/><path d="M56 40l2-5 2 5z" fill="#e33"/><text x="58" y="54" font-family="Inter" font-size="10" text-anchor="middle" fill="#333">3D</text></svg></a>
            <a href="#" class="app" aria-label="提醒事项"><svg viewBox="0 0 76 76"><g transform="rotate(-7 38 38)"><rect x="14" y="9" width="48" height="60" rx="4" fill="#2e2e30"/><rect x="14" y="8" width="47" height="58" rx="4" fill="#fafafa"/><path d="M28 17h28M28 30h28M28 42h28M28 54h28" stroke="#d8d8d8"/><circle cx="21" cy="20" r="4" fill="#fb9028"/><circle cx="21" cy="31" r="4" fill="#2ea6f5"/><circle cx="21" cy="42" r="4" fill="#63d344"/><circle cx="21" cy="53" r="4" fill="#c878e0"/></g></svg></a>
            <a href="#" class="app" aria-label="信息"><svg viewBox="0 0 76 76"><defs><linearGradient id="msg" x2="0" y2="1"><stop stop-color="#5cc2fb"/><stop offset="1" stop-color="#1f82f5"/></linearGradient></defs><path d="M38 10c18 0 31 11 31 26S56 61 38 61l-10-1c-4 3-8 5-12 5 3-3 4-5 4-9C12 52 7 45 7 36c0-15 13-26 31-26z" fill="url(#msg)"/><path d="M49 36c11 0 18 6 18 15 0 5-2 8-6 11 0 3 1 4 2 6-4 0-6-2-9-3-13 1-23-4-23-14 0-9 7-15 18-15z" fill="#f3f8fc"/><g fill="#1860a8"><circle cx="40" cy="51" r="3"/><circle cx="49" cy="51" r="3"/><circle cx="58" cy="51" r="3"/></g></svg></a>
            <a href="#" class="app" aria-label="照片"><svg viewBox="0 0 76 76"><circle cx="38" cy="38" r="31" fill="#f4f4f4" stroke="#ddd"/><g class="petals"><rect x="30" y="11" width="16" height="27" rx="8" fill="#f99b23"/><rect x="30" y="11" width="16" height="27" rx="8" fill="#e8d334" transform="rotate(45 38 38)"/><rect x="30" y="11" width="16" height="27" rx="8" fill="#b2d236" transform="rotate(90 38 38)"/><rect x="30" y="11" width="16" height="27" rx="8" fill="#63bb83" transform="rotate(135 38 38)"/><rect x="30" y="11" width="16" height="27" rx="8" fill="#62a5dc" transform="rotate(180 38 38)"/><rect x="30" y="11" width="16" height="27" rx="8" fill="#8d83c4" transform="rotate(225 38 38)"/><rect x="30" y="11" width="16" height="27" rx="8" fill="#cb7ba8" transform="rotate(270 38 38)"/><rect x="30" y="11" width="16" height="27" rx="8" fill="#ee5340" transform="rotate(315 38 38)"/></g></svg><span class="badge">1</span></a>
            <a href="#" class="app" aria-label="FaceTime"><svg viewBox="0 0 76 76"><defs><linearGradient id="ft" x2="0" y2="1"><stop stop-color="#43ee72"/><stop offset="1" stop-color="#17c93a"/></linearGradient></defs><rect x="8" y="12" width="56" height="50" rx="6" fill="url(#ft)"/><rect x="17" y="24" width="27" height="25" rx="5" fill="#f7fff8"/><path d="M46 34l10-8v20l-10-6z" fill="#f7fff8"/><circle cx="55" cy="50" r="15.500" fill="#f7f7f7" stroke="#d8d8d8"/><path d="M49 42l4 5-2 2c1 3 3 5 6 7l2-2 4 4c-2 4-6 4-9 1-5-3-9-9-8-14z" fill="#24c74b"/></svg></a>
            <a href="#" class="app running" aria-label="iTunes"><svg viewBox="0 0 76 76"><defs><linearGradient id="it" x1="0" y1="0" x2="1" y2="1"><stop stop-color="#fb5a86"/><stop offset=".5" stop-color="#b45ee8"/><stop offset="1" stop-color="#2fc1f8"/></linearGradient></defs><circle cx="38" cy="38" r="30" fill="#fafafe" stroke="url(#it)" stroke-width="4"/><path d="M31 23l22-5v30c0 9-12 9-12 2 0-5 5-6 8-6V28l-14 3v24c0 9-13 8-13 1 0-5 5-6 9-6z" fill="url(#it)"/></svg></a>
            <a href="#" class="app" aria-label="图书"><svg viewBox="0 0 76 76"><defs><linearGradient id="bk" x2="0" y2="1"><stop stop-color="#fdb42c"/><stop offset="1" stop-color="#d9460f"/></linearGradient></defs><circle cx="38" cy="38" r="30" fill="url(#bk)" stroke="#f4f0ee" stroke-width="3"/><path d="M19 25c8-4 15-3 19 2 4-5 11-6 19-2v28c-8-3-15-2-19 2-4-4-11-5-19-2z" fill="#f1f1f1"/><path d="M38 27v28" stroke="#d8c5b8" stroke-width="2"/></svg></a>
            <a href="#" class="app" aria-label="App Store"><svg viewBox="0 0 76 76"><defs><linearGradient id="as" x2="0" y2="1"><stop stop-color="#20c3fc"/><stop offset="1" stop-color="#1d62ee"/></linearGradient></defs><circle cx="38" cy="38" r="30" fill="url(#as)" stroke="#f0f2f4" stroke-width="3"/><path d="M35 19l18 32M41 19L25 47M18 44h24M50 44h8M22 52l-1 2" stroke="#fff" stroke-width="5" stroke-linecap="round"/></svg><span class="badge">2</span></a>
            <a href="#" class="app" aria-label="系统偏好设置"><svg viewBox="0 0 76 76"><defs><linearGradient id="sp" x2="0" y2="1"><stop stop-color="#b8c6ce"/><stop offset="1" stop-color="#77787a"/></linearGradient></defs><rect x="7" y="9" width="62" height="58" rx="3" fill="url(#sp)"/><circle cx="38" cy="38" r="25" fill="#29292a"/><circle cx="38" cy="38" r="18" fill="#333" stroke="#b8b8b8" stroke-width="4"/><circle cx="38" cy="38" r="21" fill="none" stroke="#b8b8b8" stroke-width="3" stroke-dasharray="3 3"/><path d="M38 38h18M38 38L29 22M38 38L29 54" stroke="#b8b8b8" stroke-width="4"/><circle cx="38" cy="38" r="5" fill="#999"/></svg><span class="badge">1</span></a>
            <a href="#" class="app" aria-label="客服"><svg viewBox="0 0 76 76"><rect x="2" y="2" width="72" height="72" rx="8" fill="#1fc58a"/><path d="M20 10h36q12 0 12 12v26q0 12-12 12H34l-12 6v-6q-14 0-14-12V22q0-12 12-12z" fill="#fff"/><path d="M18 30c0-16 40-16 40 0M19 46c2 7 6 8 11 6" fill="none" stroke="#1fb883" stroke-width="3"/><rect x="13" y="29" width="8" height="17" rx="4" fill="#1fb883"/><rect x="55" y="29" width="8" height="17" rx="4" fill="#1fb883"/></svg></a>
            <a href="#" class="app running" aria-label="Chrome"><svg viewBox="0 0 76 76"><circle cx="38" cy="38" r="31" fill="#2c9c5b"/><path d="M38 38L11 22.500A31 31 0 0 1 65 22.500z" fill="#da483f"/><path d="M38 22.500h27A31 31 0 0 1 38 69l13-23z" fill="#fdcb4e"/><circle cx="38" cy="38" r="14" fill="#f4f4f4"/><circle cx="38" cy="38" r="11.500" fill="#4b87ee"/></svg></a>
            <span class="dock-sep"></span>
            <a href="#" class="app running" aria-label="Teams"><svg viewBox="0 0 76 76"><circle cx="39" cy="19" r="9.500" fill="#7b83eb"/><circle cx="59" cy="22" r="6.500" fill="#5059c9"/><path d="M50 31h18v18c0 10-12 12-18 5z" fill="#5059c9"/><path d="M26 31h29v18c0 22-29 22-29 0z" fill="#7b83eb"/><rect x="6" y="22" width="31" height="32" rx="2" fill="#4b53bc"/><text x="21" y="46" font-family="Open Sans" font-size="23" font-weight="700" text-anchor="middle" fill="#fff">T</text></svg></a>
            <a href="#" class="app running" aria-label="腾讯视频"><svg viewBox="0 0 76 76"><path d="M20 16c2-7 8-8 13-4l32 20q8 6 0 12L33 64q-7 4-13-4z" fill="#249cf5"/><path d="M8 22c2-7 8-7 13-4v40c-5 4-11 3-12-3-2-11-2-22-1-33z" fill="#fb8a25"/><path d="M18 20q1-5 8-2l28 16q5 4 0 8L26 58q-7 2-8-3z" fill="#86cf30"/><path d="M26 29l19 9-19 11q-1-10 0-20z" fill="#fff"/></svg></a>
            <a href="#" class="app running" aria-label="爱奇艺"><svg viewBox="0 0 76 76"><rect x="5" y="5" width="66" height="66" rx="9" fill="#1bd127"/><path d="M14 27v-4q0-4 4-4 20-4 40 0 4 0 4 4v4M14 48v4q0 4 4 4 20 4 40 0 4 0 4-4v-4" fill="none" stroke="#fff" stroke-width="3.500"/><text x="38" y="46" font-family="Roboto" font-size="21" font-weight="700" text-anchor="middle" fill="#fff">iQIYI</text></svg></a>
            <a href="#" class="app running" aria-label="Acrobat"><svg viewBox="0 0 76 76"><rect x="5" y="5" width="66" height="64" fill="#34100e" stroke="#f13a20" stroke-width="3"/><path d="M17 55c11-5 24-20 20-37-4-3-6 3 0 16 5 11 14 15 19 13 3-4-9-7-20-3-12 4-22 11-18 12" fill="none" stroke="#fff" stroke-width="2.500"/></svg></a>
            <a href="#" class="app running" aria-label="Word"><svg viewBox="0 0 76 76"><path d="M34 15h35v48H34z" fill="#fff" stroke="#ddd"/><path d="M38 23h26M38 35h26M38 47h26" stroke="#3b6fb5" stroke-width="3"/><path d="M38 29h26M38 41h26M38 53h26" stroke="#333" stroke-width="3" stroke-dasharray="16 10"/><path d="M6 15l37-8v62L6 62z" fill="#2f62a9"/><text x="25" y="48" font-family="Open Sans" font-size="26" font-weight="700" text-anchor="middle" fill="#fff">W</text></svg></a>
            <a href="#" class="app running" aria-label="PowerPoint"><svg viewBox="0 0 76 76"><path d="M40 16h29v44H40z" fill="#fff" stroke="#ddd"/><circle cx="51" cy="33" r="8" fill="#3a3737"/><path d="M54 30v-9c5 0 8 4 8 9z" fill="#dd5b48"/><path d="M43 47h21M43 53h21" stroke="#dd5b48" stroke-width="2.500"/><path d="M6 15l37-8v62L6 62z" fill="#e04a31"/><text x="25" y="48" font-family="Open Sans" font-size="26" font-weight="700" text-anchor="middle" fill="#fff">P</text></svg></a>
            <a href="#" class="app running" aria-label="QQ音乐"><svg viewBox="0 0 76 76"><circle cx="38" cy="38" r="33" fill="#fdd92f"/><path d="M56 4c1 13-6 18-18 21l14 27c3 8-2 17-14 17-10 0-16-6-15-14 1-10 12-16 21-11L26 13c13 1 23-1 30-9z" fill="#23bd8d"/></svg></a>
            <a href="#" class="app running" aria-label="下载"><svg viewBox="0 0 76 76"><defs><linearGradient id="isl" x2="0" y2="1"><stop stop-color="#5c6687"/><stop offset=".5" stop-color="#a58189"/><stop offset="1" stop-color="#1c1c34"/></linearGradient></defs><circle cx="38" cy="45" r="25" fill="url(#isl)" stroke="#dfdfea" stroke-width="2.500"/><path d="M18 46c7-1 9-9 18-11 7 3 14 3 18 9 4 3-8 5-10 8-3 6-9 4-10-1-5-3-12-1-16-5z" fill="#4b4238"/><path d="M32 2h12v15h6L38 30 26 17h6z" fill="#b5c2c8"/></svg></a>
            <a href="#" class="app running" aria-label="Spotify"><svg viewBox="0 0 76 76"><circle cx="38" cy="38" r="31" fill="#2fd666"/><g fill="none" stroke="#14191a" stroke-linecap="round"><path d="M20 28c13-4 28-2 38 4" stroke-width="6"/><path d="M22 38c11-3 23-2 32 4" stroke-width="5"/><path d="M23 48c10-2 19-1 27 4" stroke-width="4"/></g></svg></a>
            <a href="#" class="app running" aria-label="Excel"><svg viewBox="0 0 76 76"><path d="M34 15h35v48H34z" fill="#fff" stroke="#ddd"/><path d="M38 22h26" stroke="#333" stroke-width="6"/><path d="M38 31h26M38 39h26M38 47h26M38 55h26" stroke="#4f9973" stroke-width="5"/><path d="M53 16v46" stroke="#fff" stroke-width="3"/><path d="M6 15l37-8v62L6 62z" fill="#24774a"/><text x="24" y="48" font-family="Open Sans" font-size="27" font-weight="700" text-anchor="middle" fill="#fff">X</text></svg></a>
            <span class="dock-sep dark"></span>
            <a href="#" class="app" aria-label="Teams 窗口"><svg viewBox="0 0 76 76"><rect x="4" y="20" width="68" height="38" fill="#f1f0ef" stroke="#8588a8"/><path d="M4 19h68v4H4z" fill="#3f4270"/><path d="M24 19h30v3H24z" fill="#c9cad8"/><path d="M4 22h5v36H4z" fill="#3f4270"/><path d="M9 23h14v35H9z" fill="#fff"/><path d="M11 29h8M11 34h9M11 39h7M11 44h8" stroke="#cc9a94"/><path d="M42 32h9l-3 10h-8z" fill="#dd9d72"/><path d="M40 35h5v4h-5z" fill="#565cc0"/><circle cx="60" cy="53" r="4.500" fill="#7b83eb"/><circle cx="68" cy="55" r="3" fill="#5059c9"/><path d="M56 58h16v8q-5 7-16 2z" fill="#7b83eb"/><rect x="47" y="54" width="13" height="14" fill="#4b53bc"/><text x="53" y="65" font-family="Open Sans" font-size="11" font-weight="700" text-anchor="middle" fill="#fff">T</text></svg></a>
            <a href="#" class="app" aria-label="废纸篓"><svg viewBox="0 0 76 76"><path d="M15 14l10-9 6 4 8-5 7 5 8-4 8 9-4 8H18z" fill="#ece9e6" stroke="#aaa"/><path d="M22 13l5-4 4 7zM42 15l6-8 6 8z" fill="#444"/><path d="M32 12h8l-4 6z" fill="#4eb8b8"/><path d="M13 12c8 5 42 5 50 0l-7 53c-3 6-33 6-36 0z" fill="#dddcd9" opacity=".93"/><path d="M13 12c8 5 42 5 50 0" fill="none" stroke="#fff" stroke-width="2"/><path d="M25 24l4 38M50 24l-4 38" stroke="#f7f7f7" stroke-width="4" opacity=".7"/></svg></a>
        </div>
    </div>

    <script>
        const letters = document.getElementById('letters');
        const rows = document.getElementById('rows');
        const columns = 'ABCDEFGHIJKLMNOPQRS'.split('');
        const selectedColumn = 'E';
        const noShows = [2, 3, 5, 5, 6, 3, 0, 1, 2, 2, 9, 7, 4, 6, 7, 2, 9, 3, 3, 5, 7, 3, 1, 2, 5, 2, 8, 7, 5];

        function addCell(row, tag, text, className) {
            const cell = document.createElement(tag);
            cell.textContent = text;
            if (className) cell.className = className;
            row.appendChild(cell);
        }

        addCell(letters, 'th', '', 'corner');
        columns.forEach(letter => {
            let name = letter === 'B' ? 'col-b' : 'col';
            if (letter === selectedColumn) name += ' selected';
            addCell(letters, 'th', letter, name);
        });

        for (let n = 1; n <= noShows.length + 1; n++) {
            const row = document.createElement('tr');
            addCell(row, 'th', n);
            columns.forEach(letter => {
                if (n === 1 && letter === 'A') addCell(row, 'td', 'Departure', 'label');
                else if (n === 1 && letter === 'B') addCell(row, 'td', 'Number of No-Shows', 'label spill');
                else if (letter === 'A') addCell(row, 'td', n - 1);
                else if (letter === 'B') addCell(row, 'td', noShows[n - 2]);
                else addCell(row, 'td', '');
            });
            rows.appendChild(row);
        }
    </script>
</body>
</html>
```
FILE: styles.css
```css
* {
    box-sizing: border-box;
}
body {
    margin: 0;
    height: 100vh;
    overflow: hidden;
    display: flex;
    flex-direction: column;
    font-family: "Inter", "Noto Sans CJK SC", sans-serif;
    background: linear-gradient(90deg, #40363a, #574b50 60px, #333 140px, #333 2400px, #24281f 2500px, #3d412e);
}
button {
    padding: 0;
    border: none;
    background: none;
    font: inherit;
    color: inherit;
    display: flex;
    align-items: center;
    justify-content: center;
}
input, select {
    font: inherit;
    color: inherit;
    border: none;
    background: none;
    outline: none;
}
svg {
    display: block;
    flex: none;
    overflow: visible;
}
a {
    color: inherit;
    text-decoration: none;
}
.caret {
    flex: none;
    width: 10px;
    height: 9px;
    background: #606060;
    clip-path: polygon(0 0, 100% 0, 50% 100%);
}
.light-caret {
    background: #dcebe2;
}

/* menu bar */
.menubar {
    flex: none;
    height: 44px;
    padding: 0 42px;
    display: flex;
    align-items: center;
    font-size: 28px;
    line-height: 44px;
    color: #17161f;
    background: linear-gradient(90deg, #dcd8d4 0%, #cbcde0 4%, #cbcde0 30%, #d2d0dc 54%, #e5d3c9 61%, #d9d5dc 69%, #d2d1de 73%, #e3dfd8 80%, #cfc4ca 88%, #ddd0cc 100%);
}
.apple {
    margin-bottom: 4px;
}
.menus {
    display: flex;
    gap: 38px;
    margin-left: 39px;
}
.app-name {
    font-size: 27px;
    font-weight: 700;
}
.menu-extras {
    margin-left: auto;
    display: flex;
    align-items: center;
    gap: 22px;
}
.menu-extras > svg {
    margin-right: 3px;
}
.battery-pct {
    margin-left: 8px;
    font-size: 24px;
}
.menu-extras .battery {
    margin: 0 6px 0 -13px;
}
.ime {
    width: 32px;
    height: 32px;
    line-height: 32px;
    border-radius: 4px;
    text-align: center;
    font-size: 24px;
    color: #eee;
    background: #322b26;
}
.ime-name {
    margin-left: -12px;
    margin-right: 18px;
    font-size: 21px;
}
.clock {
    margin-right: 24px;
}
.menu-extras .siri-mini {
    margin: 0 1px 0 4px;
}

/* title bar and ribbon tabs */
.window {
    flex: 1;
    min-height: 0;
    margin-top: 2px;
    display: flex;
    flex-direction: column;
    overflow: hidden;
    border-radius: 10px 10px 12px 12px;
    background: linear-gradient(#347e54, #267347 100px);
}
.titlebar {
    flex: none;
    height: 52px;
    display: grid;
    grid-template-columns: 1fr auto 1fr;
    align-items: center;
    border-top: 2px solid #6aa583;
}
.quick {
    display: flex;
    align-items: center;
    padding-left: 25px;
}
.quick button {
    margin-right: 31px;
}
.quick .light {
    width: 26px;
    height: 26px;
    margin-right: 14px;
    border-radius: 50%;
    border: 1px solid #2c5f42;
}
.red {
    background: #fc605c;
}
.yellow {
    background: #fdbc40;
}
.quick .green {
    margin-right: 26px;
    background: #34c84a;
}
.quick-sep {
    width: 2px;
    height: 32px;
    margin-right: 31px;
    background: #2a6b47;
}
.quick .dim {
    margin-right: 16px;
    opacity: 0.4;
}
.quick .dim + .dim + .dim {
    margin: 0 39px 0 14px;
}
.doc-title {
    display: flex;
    align-items: center;
    gap: 8px;
    font-size: 25px;
    color: #dcebe2;
}
.title-right {
    display: flex;
    justify-content: flex-end;
    align-items: center;
    padding-right: 23px;
}
.search {
    width: 360px;
    height: 38px;
    padding: 0 12px;
    display: flex;
    align-items: center;
    gap: 6px;
    border-radius: 6px;
    background: #286341;
}
.search input {
    flex: 1;
    min-width: 0;
    padding: 0;
    font-size: 24px;
}
.search input::placeholder {
    color: #7ea58e;
    opacity: 1;
}
.smile {
    margin-left: 31px;
    gap: 8px;
}
.tabs {
    flex: none;
    height: 48px;
    padding: 0 34px 0 18px;
    display: flex;
    align-items: stretch;
    font-size: 26px;
    font-weight: 600;
    line-height: 36px;
    color: #d6e7dd;
}
.tab {
    margin: 4px 4px 0;
    padding: 0 23px 2px;
    border-radius: 4px 4px 0 0;
}
.tab.active {
    color: #217346;
    background: #fbfbfb;
}
.share {
    margin-left: auto;
    gap: 9px;
}
.share svg {
    fill: #d6e7dd;
}
.collapse {
    margin-left: 24px;
}

/* ribbon */
.ribbon {
    flex: none;
    padding: 8px 0;
    display: flex;
    border-bottom: 2px solid #c9c9c9;
    background: linear-gradient(#f9f9f9, #f4f4f4 60%);
    font-size: 21px;
    color: #111;
}
.group {
    height: 124px;
    display: flex;
    border-left: 2px solid #e0e0e0;
    padding: 0 17px;
}
.g-clip {
    border-left: none;
    padding: 0 23px 0 28px;
    gap: 28px;
}
.g-align {
    padding-right: 18px;
}
.g-wrap {
    padding: 0 24px 0 26px;
}
.g-styles {
    padding: 0 22px 0 20px;
    gap: 18px;
}
.g-styles .big {
    min-width: 84px;
}
.g-cells {
    padding: 0 26px;
}
.g-edit {
    padding-left: 28px;
    gap: 24px;
}
.big {
    flex-direction: column;
    justify-content: flex-start;
}
.big-top {
    height: 79px;
    display: flex;
    align-items: center;
    gap: 4px;
}
.g-clip .big-top {
    gap: 18px;
}
.big-label {
    line-height: 22px;
    white-space: nowrap;
}
.stack {
    display: flex;
    flex-direction: column;
    justify-content: space-between;
    align-items: flex-start;
}
.small {
    height: 32px;
    gap: 14px;
}
.small.text svg {
    margin-right: -6px;
}
.rows {
    display: flex;
    flex-direction: column;
    gap: 12px;
    padding-top: 8px;
}
.row {
    display: flex;
    gap: 10px;
    height: 48px;
}
.wide {
    height: 48px;
    justify-content: flex-start;
    gap: 8px;
}
.wide .caret {
    margin-left: 4px;
}
.pick {
    position: relative;
    height: 48px;
    border: 2px solid #bdbdbd;
    border-top-color: #a8a8a8;
    border-radius: 7px;
    background: #fff;
    font-size: 24px;
}
.pick select {
    appearance: none;
    width: 100%;
    height: 100%;
    padding: 0 30px 0 8px;
}
.pick .caret {
    position: absolute;
    right: 8px;
    top: 18px;
}
.pick::after {
    content: "";
    position: absolute;
    right: 26px;
    top: 4px;
    bottom: 4px;
    width: 2px;
    background: #e4e4e4;
}
.font-name {
    width: 296px;
}
.font-size {
    width: 104px;
}
.number-format {
    width: 316px;
}
.seg {
    display: flex;
    border: 2px solid #c6c6c6;
    border-radius: 7px;
    background: linear-gradient(#fcfcfc, #ededed);
    color: #444;
}
.seg button {
    flex: 1;
    border-left: 2px solid #dcdcdc;
}
.seg button:first-child {
    border-left: none;
}
.seg .drop {
    flex: none;
    width: 24px;
    border-left-color: #e6e6e6;
}
.seg .on {
    background: #d2d2d2;
}
.two {
    width: 116px;
}
.three {
    width: 174px;
}
.biu {
    width: 196px;
}
.mini {
    width: 78px;
}
.colors {
    width: 154px;
}
.orient {
    width: 72px;
}
.orient button {
    gap: 8px;
}
.num {
    width: 190px;
}
.seg .coins {
    flex: none;
    width: 46px;
}
.grow, .shrink, .font-color, .phonetic, .biu, .num {
    font-family: "Noto Sans", sans-serif;
}
.grow {
    font-size: 31px;
    font-weight: 500;
}
.shrink {
    font-size: 26px;
    font-weight: 500;
}
.biu {
    font-size: 28px;
}
.b {
    font-weight: 700;
}
.i {
    font-style: italic;
    font-weight: 700;
}
.u {
    text-decoration: underline;
    text-underline-offset: 6px;
}
.font-color {
    flex-direction: column;
}
.letter {
    font-size: 28px;
    font-weight: 500;
    line-height: 29px;
}
.swatch {
    width: 34px;
    height: 10px;
    border-radius: 2px;
    background: #fc0d1b;
}
.phonetic {
    flex-direction: column;
    font-size: 19px;
    line-height: 18px;
}
.phonetic b {
    align-self: flex-end;
    margin-right: 6px;
    font-size: 24px;
    line-height: 22px;
    color: #3d87d8;
}
.pct {
    font-size: 29px;
}
.thousand {
    font-size: 20px;
}
.dec button {
    flex-direction: column;
    align-items: flex-end;
    padding-right: 10px;
    font-family: "Liberation Sans", sans-serif;
    font-size: 18px;
    line-height: 20px;
}
.dec span {
    display: flex;
    align-items: center;
    gap: 2px;
}

/* update notice */
.notice {
    flex: none;
    height: 62px;
    padding: 0 16px 0 18px;
    display: flex;
    align-items: center;
    font-family: "Liberation Sans", sans-serif;
    font-size: 24px;
    color: #222;
    border-bottom: 2px solid #c9c2ad;
    background: linear-gradient(#fff5e0, #faefd9);
}
.notice strong {
    margin: 0 14px 0 18px;
}
.check {
    margin-left: auto;
    height: 38px;
    padding: 0 17px;
    border: 2px solid #bfbfbf;
    border-radius: 5px;
    font-family: "Inter", sans-serif;
    background: linear-gradient(#fff, #fffaee);
}

/* formula bar */
.formula-bar {
    flex: none;
    height: 58px;
    padding-bottom: 6px;
    display: flex;
    align-items: center;
    background: linear-gradient(#fff 52px, #8f8f8f 52px, #8f8f8f 53px, #f0f0f0 54px, #ddd 56px, #8f8f8f 57px);
    font-family: "Noto Sans CJK SC", sans-serif;
    font-size: 24px;
}
.name-box {
    width: 172px;
    height: 52px;
    padding: 0 10px 0 20px;
    display: flex;
    align-items: center;
    border-right: 2px solid #c4c4c4;
}
.name-box input {
    flex: 1;
    min-width: 0;
    padding: 2px 0 0;
}
.formula-bar > button {
    margin-left: 28px;
}
.formula-bar > button + button {
    margin-left: 31px;
}
.formula-bar .fx {
    padding-right: 16px;
    height: 32px;
    border-right: 2px solid #e4e4e4;
    font-family: "Liberation Serif", serif;
    font-style: italic;
    font-size: 34px;
    line-height: 32px;
    color: #444;
}
.formula {
    flex: 1;
    height: 38px;
    margin-left: 14px;
    background: #fdfdfd;
}
.formula-bar .expand {
    margin: 0 9px 0 22px;
}
.expand .caret {
    width: 13px;
    height: 11px;
}

/* cells */
.sheet {
    flex: 1;
    min-height: 0;
    position: relative;
    overflow: hidden;
    background: #fff;
}
.cells {
    table-layout: fixed;
    width: 2598px;
    border-collapse: separate;
    border-spacing: 0;
    font-family: "Noto Sans CJK SC", sans-serif;
    font-size: 22px;
    line-height: 30px;
    color: #111;
}
.cells th {
    padding: 0;
    font-weight: 400;
}
.cells thead th {
    height: 44px;
    padding-right: 2px;
    border-bottom: 2px solid #b9b9b9;
    background: linear-gradient(transparent, #d4d4d4) right / 2px 100% no-repeat, linear-gradient(#fff, #f6f6f6);
}
.cells .corner {
    width: 46px;
    border-right: 2px solid #b9b9b9;
    background: linear-gradient(135deg, transparent 50%, #dedede 50%) 10px 8px / 30px 30px no-repeat, #fbfbfb;
}
.cells .col {
    width: 130px;
}
.cells .col-b {
    width: 212px;
}
.cells thead .selected {
    color: #217346;
    border-bottom: 4px solid #217346;
    background: #f1f1f1;
}
.cells tbody th {
    border-right: 2px solid #b9b9b9;
    border-bottom: 2px solid #e4e4e4;
    background: #fbfbfb;
}
.cells td {
    height: 32px;
    padding: 0 3px;
    text-align: right;
    border-right: 2px solid #d4d4d4;
    border-bottom: 2px solid #d4d4d4;
}
.cells .label {
    padding-left: 4px;
    text-align: left;
    white-space: nowrap;
}
.cells .spill {
    overflow: visible;
    border-right-color: transparent;
}
.scroll-y, .scroll-x {
    position: absolute;
    border-radius: 7px;
    background: rgba(70, 70, 70, 0.5);
}
.scroll-y {
    top: 48px;
    right: 6px;
    width: 14px;
    height: 194px;
}
.scroll-x {
    left: 50px;
    bottom: 6px;
    width: calc(70% - 10px);
    height: 14px;
}

/* sheet tabs */
.sheet-tabs {
    flex: none;
    height: 54px;
    display: flex;
    align-items: flex-start;
    border-top: 2px solid #cdcdcd;
    border-bottom: 2px solid #9d9d9d;
    background: #ededed;
}
.sheet-tabs button {
    height: 48px;
    margin-left: 31px;
}
.sheet-tabs .sheet-tab {
    width: 162px;
    margin-top: -2px;
    height: 46px;
    padding-top: 4px;
    border: 2px solid #c4c4c4;
    border-top: none;
    border-bottom-color: #999;
    border-radius: 0 0 6px 6px;
    font-family: "Liberation Serif", serif;
    font-size: 25px;
    color: #217346;
    background: #fff;
}
.sheet-tabs .add {
    height: 42px;
    padding: 4px 24px 0 0;
    border-right: 2px solid #ccc;
}

/* status bar */
.status {
    flex: none;
    height: 44px;
    padding: 0 43px 0 48px;
    display: flex;
    align-items: center;
    font-size: 24px;
    line-height: 30px;
    color: #4d4d4d;
    background: linear-gradient(#dedede, #c9c9c9);
}
.ready {
    margin-right: auto;
}
.view {
    width: 71px;
    height: 44px;
}
.view.on {
    width: 74px;
    background: #9c9c9c;
}
.view:nth-of-type(3) {
    margin-right: 16px;
}
.status input {
    appearance: none;
    width: 196px;
    height: 8px;
    margin: 0 16px;
    border-radius: 4px;
    background: #929292;
}
.status input::-webkit-slider-thumb {
    appearance: none;
    width: 22px;
    height: 22px;
    border-radius: 50%;
    background: #f8f8f8;
    box-shadow: 0 1px 2px #777;
}
.zoom-value {
    width: 66px;
    margin-left: 35px;
}

/* sliver of the document under the window */
.behind {
    flex: none;
    height: 2px;
    overflow: hidden;
    display: flex;
    align-items: center;
    padding-left: 355px;
    font-size: 24px;
    color: #111;
    background: linear-gradient(90deg, #333 105px, #848484 105px, #848484 80%, #0b0b0b 80%);
}

/* dock */
.dock-area {
    flex: none;
    height: 94px;
    display: flex;
    justify-content: center;
}
.dock {
    padding: 5px 7px 0 6px;
    display: flex;
    border-radius: 10px 10px 0 0;
    background: linear-gradient(90deg, #a79f9e, #cbc9c9 4%, #dcdcdc 8%, #dedede 60%, #ead5d4 73%, #dbd8d6 78%, #8f8172 84%, #8f8069 88%, #9c9675 94%, #85897a);
}
.app {
    position: relative;
    width: 76px;
    height: 89px;
}
.app svg {
    width: 76px;
    height: 76px;
}
.petals rect {
    mix-blend-mode: multiply;
    opacity: 0.9;
}
.running::after {
    content: "";
    display: block;
    width: 8px;
    height: 8px;
    margin: 1px auto 0;
    border-radius: 50%;
    background: #4c4847;
}
.badge {
    position: absolute;
    top: 2px;
    right: 0;
    width: 28px;
    height: 28px;
    border-radius: 50%;
    line-height: 28px;
    text-align: center;
    font-size: 16px;
    color: #fff;
    background: #fb4a49;
}
.dock-sep {
    width: 2px;
    height: 46px;
    margin: 19px 14px 0 22px;
    background: #a6a6a6;
}
.dock-sep.dark {
    height: 70px;
    margin: 7px 16px 0 20px;
    background: #6c6852;
}
```
